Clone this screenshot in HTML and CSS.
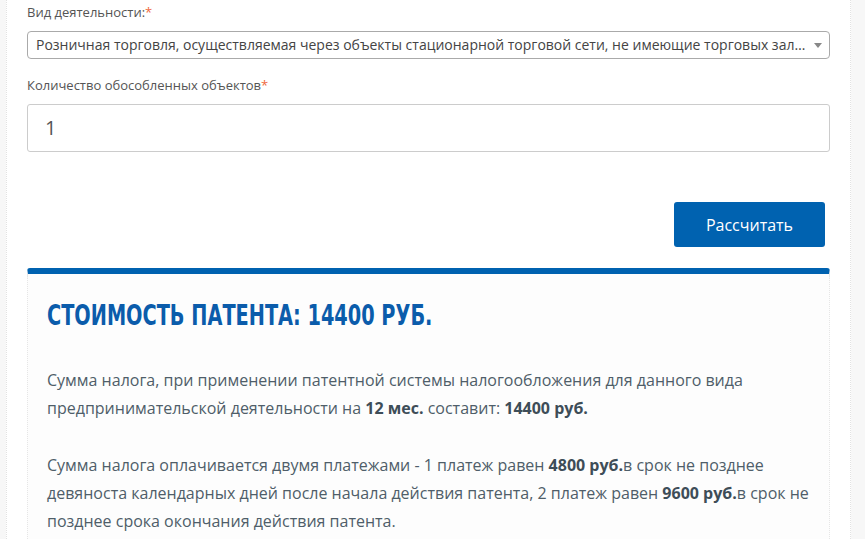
FILE: index.html
```html
<!DOCTYPE html>
<html lang="ru">

<head>
    <meta charset="UTF-8">
    <meta name="viewport" content="width=device-width, initial-scale=1.0">
    <title>Калькулятор патента</title>
    <link rel="stylesheet" href="styles.css">
</head>

<body>
    <div class="page">
        <form class="calc-form">
            <label class="field-label">Вид деятельности:<span class="req">*</span></label>
            <div class="select-box">
                <span class="select-text">Розничная торговля, осуществляемая через объекты стационарной торговой сети, не имеющие торговых залов, а также через объекты нестационарной торговой сети</span>
                <span class="select-arrow"></span>
            </div>

            <label class="field-label field-label-2">Количество обособленных объектов<span class="req">*</span></label>
            <div class="text-input">1</div>

            <div class="form-actions">
                <button type="button" class="btn-calc">Рассчитать</button>
            </div>
        </form>

        <!--результат расчета-->
        <div class="result">
            <h2 class="result-title"><span>Стоимость патента: 14400 руб.</span></h2>
            <p>Сумма налога, при применении патентной системы налогообложения для данного вида предпринимательской деятельности на <b>12 мес.</b> составит: <b>14400 руб.</b></p>
            <p>Сумма налога оплачивается двумя платежами - 1 платеж равен <b>4800 руб.</b>в срок не позднее девяноста календарных дней после начала действия патента, 2 платеж равен <b>9600 руб.</b>в срок не позднее срока окончания действия патента.</p>
        </div>
    </div>
</body>

</html>
```

FILE: styles.css
```css
* {
    padding: 0;
    margin: 0;
    box-sizing: border-box;
}

body {
    background: #f7f7f7;
    font-family: "Open Sans", "Liberation Sans", sans-serif;
    height: 539px;
    overflow: hidden;
}

.page {
    margin: 0 14px 0 6px;
    height: 539px;
    overflow: hidden;
    background: #fff;
    border-left: 1px dotted #e2e2e2;
    border-right: 1px dotted #e2e2e2;
    padding: 2px 20px 0 20px;
}

/*форма*/
.field-label {
    display: block;
    font-size: 13px;
    line-height: 20px;
    color: #555;
    margin-bottom: 9px;
}

.field-label-2 {
    margin-top: 16px;
    margin-bottom: 9px;
}

.req {
    color: #ef6a3c;
}

.select-box {
    position: relative;
    height: 28px;
    border: 1px solid #aaa;
    border-radius: 4px;
    padding: 0 19px 0 8px;
    font-size: 14px;
    line-height: 26px;
    color: #444;
}

.select-text {
    display: block;
    white-space: nowrap;
    overflow: hidden;
    text-overflow: ellipsis;
}

.select-arrow {
    position: absolute;
    right: 7px;
    top: 11px;
    border-top: 5px solid #888;
    border-left: 4px solid transparent;
    border-right: 4px solid transparent;
}

.text-input {
    height: 48px;
    border: 1px solid #ccc;
    border-radius: 3px;
    padding-left: 17px;
    font-size: 20px;
    line-height: 46px;
    color: #555;
}

.form-actions {
    display: flex;
    justify-content: flex-end;
    padding: 50px 5px 0 0;
}

.btn-calc {
    width: 151px;
    height: 45px;
    border: none;
    border-radius: 3px;
    background: #0062b0;
    color: #fff;
    font-family: "Open Sans", "Liberation Sans", sans-serif;
    font-size: 16px;
    cursor: pointer;
}

/*результат*/
.result {
    margin-top: 21px;
    border-top: 6px solid #0062b0;
    border-radius: 3px 3px 0 0;
    border-left: 1px dotted #e6e6e6;
    border-right: 1px dotted #e6e6e6;
    background: #fdfdfd;
    padding: 24px 19px 40px 19px;
    color: #4f5e69;
}

.result-title {
    font-family: "DejaVu Sans Condensed", "DejaVu Sans", sans-serif;
    font-weight: bold;
    text-transform: uppercase;
    font-size: 29px;
    line-height: 34px;
    color: #0b5cab;
    margin-bottom: 34px;
    white-space: nowrap;
}

/*узкое начертание, как у DIN Condensed*/
.result-title span {
    display: inline-block;
    transform: scaleX(0.74);
    transform-origin: left center;
}

.result p {
    font-size: 16px;
    line-height: 28px;
    margin-bottom: 29px;
}

.result b {
    color: #3e4d58;
}
```
